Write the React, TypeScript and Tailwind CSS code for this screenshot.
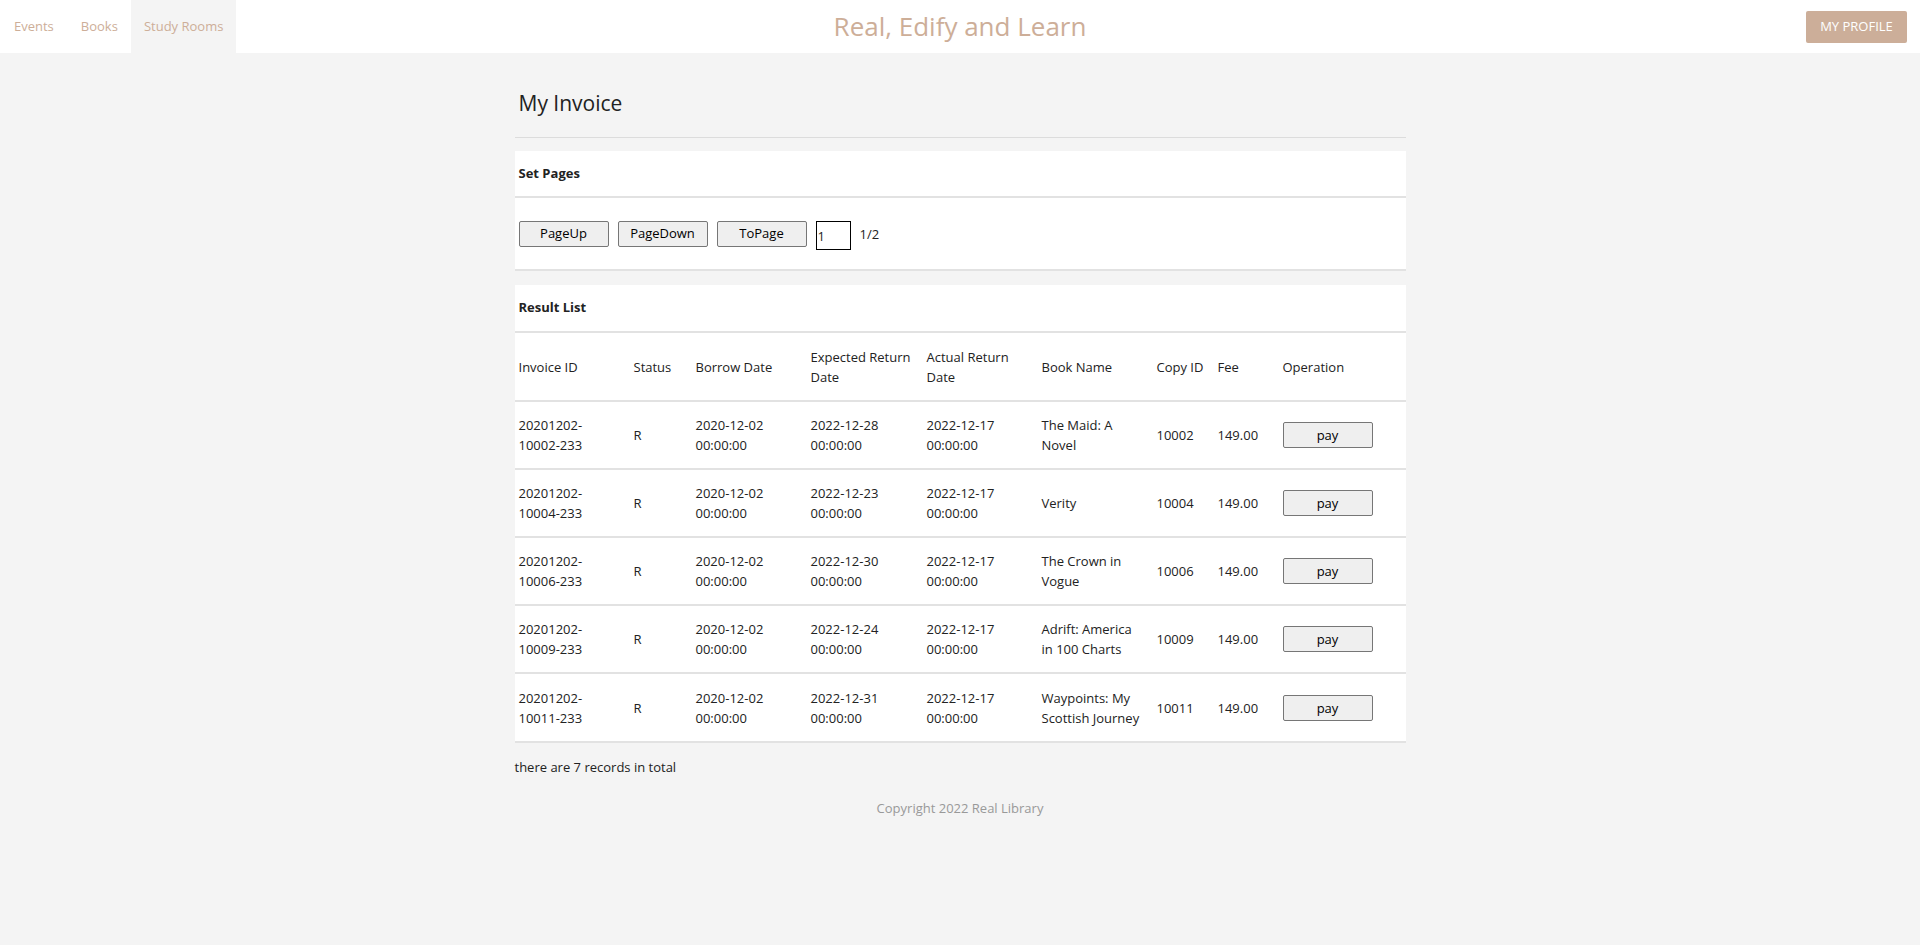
import React from 'react';

// Invoice rows shown on the first page
const invoices = [
  { id: '20201202-10002-233', status: 'R', borrow: '2020-12-02 00:00:00', expected: '2022-12-28 00:00:00', actual: '2022-12-17 00:00:00', book: 'The Maid: A Novel', copy: '10002', fee: '149.00' },
  { id: '20201202-10004-233', status: 'R', borrow: '2020-12-02 00:00:00', expected: '2022-12-23 00:00:00', actual: '2022-12-17 00:00:00', book: 'Verity', copy: '10004', fee: '149.00' },
  { id: '20201202-10006-233', status: 'R', borrow: '2020-12-02 00:00:00', expected: '2022-12-30 00:00:00', actual: '2022-12-17 00:00:00', book: 'The Crown in Vogue', copy: '10006', fee: '149.00' },
  { id: '20201202-10009-233', status: 'R', borrow: '2020-12-02 00:00:00', expected: '2022-12-24 00:00:00', actual: '2022-12-17 00:00:00', book: 'Adrift: America in 100 Charts', copy: '10009', fee: '149.00' },
  { id: '20201202-10011-233', status: 'R', borrow: '2020-12-02 00:00:00', expected: '2022-12-31 00:00:00', actual: '2022-12-17 00:00:00', book: 'Waypoints: My Scottish Journey', copy: '10011', fee: '149.00' },
];

const columns = [
  { label: 'Invoice ID', w: 'w-[115px]' },
  { label: 'Status', w: 'w-[62px]' },
  { label: 'Borrow Date', w: 'w-[115px]' },
  { label: 'Expected Return Date', w: 'w-[116px]' },
  { label: 'Actual Return Date', w: 'w-[115px]' },
  { label: 'Book Name', w: 'w-[115px]' },
  { label: 'Copy ID', w: 'w-[61px]' },
  { label: 'Fee', w: 'w-[65px]' },
  { label: 'Operation', w: '' },
];

const btn =
  'h-[26px] w-[90px] bg-[#efefef] border border-[#767676] rounded-[2px] text-[13px] text-black';

export default function App() {
  return (
    <div className="min-h-screen bg-[#f4f4f4] text-[#222] font-['Segoe_UI','Open_Sans',sans-serif] text-[13px]">
      {/* Top bar */}
      <header className="h-[53px] bg-white flex items-center relative">
        <nav className="flex h-full text-[13px] text-[#cdae98]">
          <a className="px-[14px] flex items-center">Events</a>
          <a className="px-[13px] flex items-center">Books</a>
          <a className="px-[13px] flex items-center bg-[#f4f4f4]">Study Rooms</a>
        </nav>
        <h1 className="absolute left-1/2 -translate-x-1/2 top-[7px] text-[26px] text-[#cdae98]">
          Real, Edify and Learn
        </h1>
        <button className="ml-auto mr-[13px] h-[32px] w-[101px] bg-[#ccae99] text-white text-[13px] rounded-[2px]">
          MY PROFILE
        </button>
      </header>

      <main className="w-[891px] mx-auto">
        <div className="pt-[35px] pb-[19px] px-[4px] border-b border-[#dcdcdc]">
          <h2 className="text-[21px] leading-[30px] text-[#222]">My Invoice</h2>
        </div>

        {/* Paging */}
        <section className="bg-white mt-[13px] border-b-2 border-[#e2e2e2]">
          <div className="h-[47px] flex items-center px-[4px] border-b-2 border-[#e2e2e2] font-bold">Set Pages</div>
          <div className="h-[71px] flex items-start pt-[23px] px-[4px] gap-[9px]">
            <button className={btn}>PageUp</button>
            <button className={btn}>PageDown</button>
            <button className={btn}>ToPage</button>
            <input
              defaultValue="1"
              className="w-[31px] h-[25px] box-content border border-black px-[1px] py-[1px] text-[13px] outline-none"
            />
            <span className="self-start mt-[4px]">1/2</span>
          </div>
        </section>

        {/* Results */}
        <section className="bg-white mt-[14px] border-b-2 border-[#e2e2e2]">
          <div className="h-[48px] flex items-center px-[4px] border-b-2 border-[#e2e2e2] font-bold">Result List</div>
          <table className="w-full table-fixed border-collapse leading-[20px]">
            <thead>
              <tr className="h-[68px] border-b-2 border-[#e2e2e2]">
                {columns.map((c) => (
                  <th key={c.label} className={`${c.w} text-left font-normal px-[4px] align-middle`}>
                    {c.label}
                  </th>
                ))}
              </tr>
            </thead>
            <tbody>
              {invoices.map((inv, i) => (
                <tr key={inv.id} className={`h-[68px] ${i < invoices.length - 1 ? 'border-b-2 border-[#e2e2e2]' : ''}`}>
                  <td className="px-[4px] align-middle">{inv.id.slice(0, 9)}<br />{inv.id.slice(9)}</td>
                  <td className="px-[4px] align-middle">{inv.status}</td>
                  <td className="px-[4px] align-middle">{inv.borrow.slice(0, 10)}<br />{inv.borrow.slice(11)}</td>
                  <td className="px-[4px] align-middle">{inv.expected.slice(0, 10)}<br />{inv.expected.slice(11)}</td>
                  <td className="px-[4px] align-middle">{inv.actual.slice(0, 10)}<br />{inv.actual.slice(11)}</td>
                  <td className="pl-[4px] pr-[10px] align-middle">{inv.book}</td>
                  <td className="px-[4px] align-middle">{inv.copy}</td>
                  <td className="px-[4px] align-middle">{inv.fee}</td>
                  <td className="px-[4px] align-middle">
                    <button className={btn}>pay</button>
                  </td>
                </tr>
              ))}
            </tbody>
          </table>
        </section>

        <p className="mt-[14px] leading-[20px]">there are 7 records in total</p>
        <p className="mt-[21px] text-center text-[#999] leading-[20px]">Copyright 2022 Real Library</p>
      </main>
    </div>
  );
}
